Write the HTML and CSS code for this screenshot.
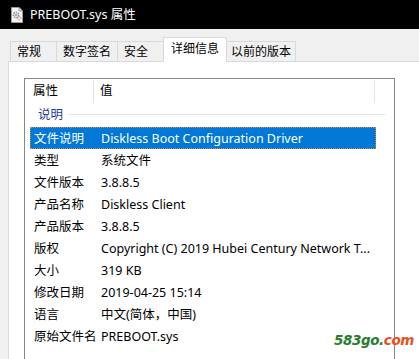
FILE: index.html
```html
<html>

<head>
    <meta charset="utf-8">
    <link rel="stylesheet" href="styles.css">
</head>

<body>
    <div class="titlebar">
        <svg class="file-icon" width="12" height="16" viewBox="0 0 12 16">
            <path d="M0.5 0.5 H8 L11.5 4 V15.5 H0.5 Z" fill="#f4f4f4" stroke="#9a9a9a" />
            <path d="M8 0.5 V4 H11.5" fill="#dcdcdc" stroke="#9a9a9a" />
            <circle cx="5" cy="8" r="2.6" fill="none" stroke="#8c8c8c" stroke-width="1.6" stroke-dasharray="1.4 0.9" />
            <circle cx="5" cy="8" r="1" fill="#8c8c8c" />
            <circle cx="8.2" cy="11.2" r="1.6" fill="none" stroke="#a0a0a0" stroke-width="1.2" stroke-dasharray="1 0.7" />
        </svg>
        <span class="title">PREBOOT.sys 属性</span>
    </div>

    <div class="dialog">
        <div class="tabs">
            <div class="tab">常规</div>
            <div class="tab">数字签名</div>
            <div class="tab">安全</div>
            <div class="tab active">详细信息</div>
            <div class="tab">以前的版本</div>
        </div>

        <div class="panel">
            <div class="list">
                <div class="list-head">
                    <div class="head-name">属性</div>
                    <div class="head-value">值</div>
                </div>

                <div class="group">
                    <span class="group-label">说明</span>
                    <span class="group-rule"></span>
                </div>

                <div class="row selected"><span class="name">文件说明</span><span class="value">Diskless Boot Configuration Driver</span></div>
                <div class="row"><span class="name">类型</span><span class="value">系统文件</span></div>
                <div class="row"><span class="name">文件版本</span><span class="value">3.8.8.5</span></div>
                <div class="row"><span class="name">产品名称</span><span class="value">Diskless Client</span></div>
                <div class="row"><span class="name">产品版本</span><span class="value">3.8.8.5</span></div>
                <div class="row"><span class="name">版权</span><span class="value">Copyright (C) 2019 Hubei Century Network T...</span></div>
                <div class="row"><span class="name">大小</span><span class="value">319 KB</span></div>
                <div class="row"><span class="name">修改日期</span><span class="value">2019-04-25 15:14</span></div>
                <div class="row"><span class="name">语言</span><span class="value">中文(简体，中国)</span></div>
                <div class="row"><span class="name">原始文件名</span><span class="value">PREBOOT.sys</span></div>
            </div>
        </div>
    </div>

    <div class="watermark"><span class="wm-green">583go.</span><span class="wm-red">com</span></div>
</body>

</html>
```

FILE: styles.css
```css
body {
    margin: 0;
    width: 419px;
    height: 359px;
    overflow: hidden;
    position: relative;
    background: #f0f0f0;
    font-family: 'Noto Sans', 'Noto Sans CJK SC', sans-serif;
    font-size: 12.5px;
    color: #000;
}

.titlebar {
    height: 29px;
    background: #000;
    display: flex;
    align-items: center;
    padding-left: 11px;
    gap: 7px;
}

.file-icon {
    display: block;
    margin-top: 1px;
}

.title {
    color: #fff;
    font-size: 12.5px;
    line-height: 16px;
}

.dialog {
    padding-top: 9px;
}

.tabs {
    display: flex;
    align-items: flex-end;
    padding-left: 10px;
    height: 24px;
    margin-bottom: -1px;
    position: relative;
    z-index: 1;
}

.tab {
    box-sizing: border-box;
    min-width: 47px;
    height: 21px;
    padding: 0 6px;
    margin-right: -1px;
    border: 1px solid #d9d9d9;
    background: #f0f0f0;
    font-size: 12px;
    line-height: 20px;
    white-space: nowrap;
}

.tab:last-child {
    padding: 0 4px;
}

.tab.active {
    height: 25px;
    padding: 0 7px;
    background: #fff;
    border-bottom-color: #fff;
    line-height: 21px;
}

.panel {
    margin-left: 8px;
    border-top: 1px solid #d9d9d9;
    border-left: 1px solid #d9d9d9;
    background: #fff;
    height: 281px;
    padding: 16px 0 0 15px;
}

.list {
    width: 369px;
    height: 280px;
    border: 1px solid #828790;
    border-bottom: none;
    background: #fff;
}

.list-head {
    display: flex;
    height: 24px;
    line-height: 22px;
}

.head-name {
    width: 60px;
    padding-left: 8px;
    border-right: 1px solid #e5e5e5;
    margin-top: 1px;
}

.head-value {
    width: 274px;
    padding-left: 6px;
    border-right: 1px solid #e5e5e5;
    margin-top: 1px;
}

.group {
    display: flex;
    align-items: center;
    height: 24px;
    padding-left: 13px;
    gap: 5px;
}

.group-label {
    color: #1e3a9a;
    line-height: 16px;
}

.group-rule {
    width: 317px;
    height: 1px;
    background: #e2e5ec;
    margin-top: -1px;
}

.row {
    display: flex;
    box-sizing: border-box;
    height: 22px;
    width: 346px;
    margin-left: 5px;
    padding-left: 3px;
    line-height: 21px;
    white-space: nowrap;
    border: 1px solid transparent;
}

.row.selected {
    background: #0078d7;
    color: #fff;
    border: 1px dotted #d9882a;
}

.row .name {
    width: 67px;
    flex: 0 0 auto;
}

.watermark {
    position: absolute;
    right: 5px;
    bottom: 11px;
    font-family: 'DejaVu Sans', sans-serif;
    font-size: 13.5px;
    font-weight: bold;
    font-style: italic;
    letter-spacing: -0.4px;
}

.wm-green {
    color: #2a7d2e;
}

.wm-red {
    color: #e8501e;
}
```
